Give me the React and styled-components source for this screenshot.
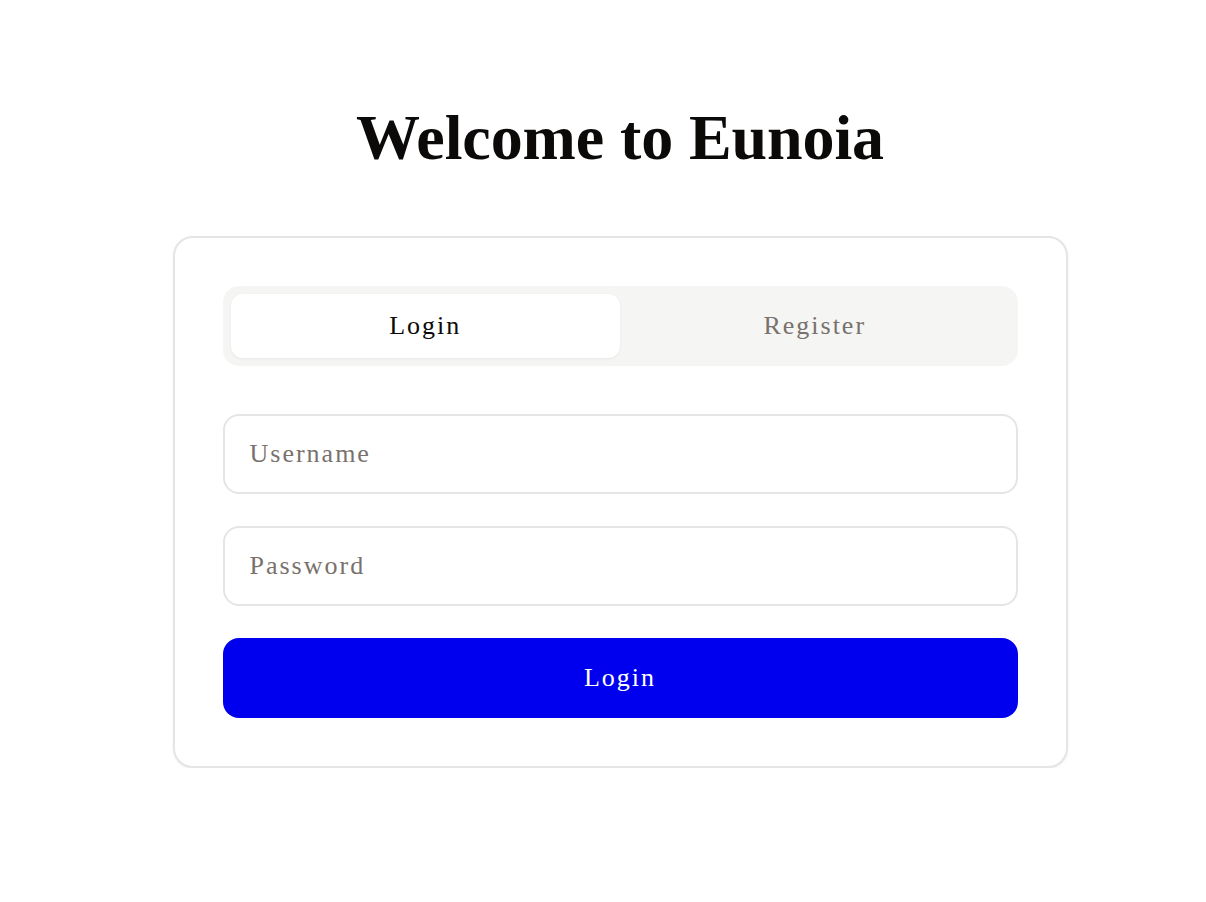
import React, { useState } from "react";
import styled, { createGlobalStyle } from "styled-components";

const Global = createGlobalStyle`
  * { box-sizing: border-box; }
  html, body { margin: 0; padding: 0; background: #ffffff; }
  body { font-family: "Liberation Serif", "Times New Roman", serif; color: #0c0a09; }
`;

const Page = styled.main`
  display: flex;
  flex-direction: column;
  align-items: center;
  padding: 98px 0 0 34px;
`;

const Title = styled.h1`
  margin: 0 0 58px;
  font-family: "Liberation Serif", serif;
  font-weight: 700;
  font-size: 64px;
  line-height: 80px;
  letter-spacing: -0.1px;
  color: #0c0a09;
`;

const Card = styled.section`
  width: 895px;
  padding: 48px;
  border: 2px solid #e7e5e4;
  border-radius: 20px;
  background: #fff;
  box-shadow: 0 1px 3px rgba(0, 0, 0, 0.06);
  display: flex;
  flex-direction: column;
`;

const Tabs = styled.div`
  display: grid;
  grid-template-columns: 1fr 1fr;
  padding: 8px;
  background: #f5f5f4;
  border-radius: 16px;
  margin-bottom: 48px;
`;

const Tab = styled.button`
  height: 64px;
  border: none;
  border-radius: 12px;
  background: ${(p) => (p.$active ? "#ffffff" : "transparent")};
  box-shadow: ${(p) => (p.$active ? "0 1px 3px rgba(0,0,0,0.06)" : "none")};
  color: ${(p) => (p.$active ? "#0c0a09" : "#78716c")};
  font-family: "Liberation Serif", serif;
  font-size: 26px;
  letter-spacing: 2px;
  cursor: pointer;
`;

const Form = styled.form`
  display: flex;
  flex-direction: column;
  gap: 32px;
`;

const Input = styled.input`
  height: 80px;
  width: 100%;
  padding: 0 25px;
  border: 2px solid #e7e5e4;
  border-radius: 16px;
  background: #fff;
  font-family: "Liberation Serif", serif;
  font-size: 26px;
  letter-spacing: 2px;
  color: #0c0a09;
  outline: none;
  &::placeholder { color: #78716c; }
`;

const Submit = styled.button`
  height: 80px;
  border: none;
  border-radius: 16px;
  background: #0000ee;
  color: #ffffff;
  font-family: "Liberation Serif", serif;
  font-size: 26px;
  letter-spacing: 2px;
  cursor: pointer;
`;

export default function App() {
  const [tab, setTab] = useState("login");
  return (
    <>
      <Global />
      <Page>
        <Title>Welcome to Eunoia</Title>
        <Card>
          <Tabs>
            <Tab $active={tab === "login"} onClick={() => setTab("login")}>Login</Tab>
            <Tab $active={tab === "register"} onClick={() => setTab("register")}>Register</Tab>
          </Tabs>
          <Form onSubmit={(e) => e.preventDefault()}>
            <Input placeholder="Username" />
            <Input type="password" placeholder="Password" />
            <Submit type="submit">Login</Submit>
          </Form>
        </Card>
      </Page>
    </>
  );
}
